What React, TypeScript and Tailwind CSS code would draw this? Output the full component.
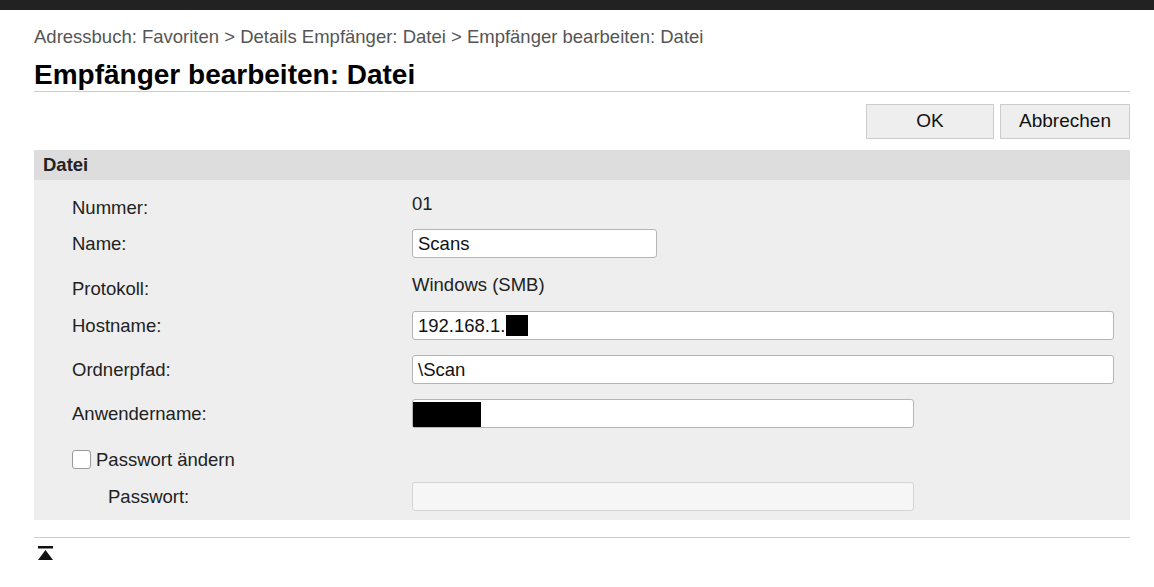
export default function App() {
  const font = { fontFamily: '"Liberation Sans", Arial, sans-serif' }
  const input =
    'h-[29px] rounded-[3px] border border-[#b5b5b5] bg-white pl-[5px] flex items-center text-[18.5px] text-[#111]'

  return (
    <div className="min-h-screen bg-white text-[#222]" style={font}>
      <div className="h-[10px] bg-[#222]" />
      <div className="mx-[34px] w-[1096px]">
        <div className="pt-[16px] text-[18.5px] leading-[22px] text-[#555]">
          Adressbuch: Favoriten &gt; Details Empfänger: Datei &gt; Empfänger bearbeiten: Datei
        </div>
        <h1 className="mt-[11px] border-b border-[#ccc] text-[28px] font-bold leading-[32px] text-black">
          Empfänger bearbeiten: Datei
        </h1>
        <div className="mt-[12px] flex justify-end gap-[6px]">
          <button className="h-[35px] w-[128px] border border-[#ccc] bg-[#eee] text-[19px] text-[#111]">
            OK
          </button>
          <button className="h-[35px] w-[130px] border border-[#ccc] bg-[#eee] text-[19px] text-[#111]">
            Abbrechen
          </button>
        </div>
        <div className="mt-[11px] flex h-[30px] items-center bg-[#ddd] pl-[9px] text-[18.5px] font-bold text-[#222]">
          Datei
        </div>
        <div className="flex flex-col bg-[#eee] pb-[9px] pl-[38px] pt-[13px] text-[18.5px] leading-[22px] text-[#222]">
          <div className="flex h-[29px]">
            <div className="w-[340px] pt-[4px]">Nummer:</div>
            <div className="pt-0">01</div>
          </div>
          <div className="mt-[7px] flex h-[29px] items-center">
            <div className="w-[340px] pt-[1px]">Name:</div>
            <div className={`${input} w-[245px]`}>Scans</div>
          </div>
          <div className="mt-[16px] flex h-[29px]">
            <div className="w-[340px] pt-[4px]">Protokoll:</div>
            <div className="pt-0">Windows (SMB)</div>
          </div>
          <div className="mt-[8px] flex h-[29px] items-center">
            <div className="w-[340px] pt-[1px]">Hostname:</div>
            <div className={`${input} w-[702px]`}>
              192.168.1.
              <span className="ml-[1px] inline-block h-[21px] w-[22px] bg-black" />
            </div>
          </div>
          <div className="mt-[15px] flex h-[29px] items-center">
            <div className="w-[340px] pt-[1px]">Ordnerpfad:</div>
            <div className={`${input} w-[702px]`}>\Scan</div>
          </div>
          <div className="mt-[15px] flex h-[29px] items-center">
            <div className="w-[340px] pt-[1px]">Anwendername:</div>
            <div className="flex h-[29px] w-[502px] items-end rounded-[3px] border border-[#b5b5b5] bg-white">
              <span className="h-[25px] w-[68px] bg-black" />
            </div>
          </div>
          <div className="mt-[17px] flex h-[29px] items-center">
            <label className="flex items-center">
              <span className="h-[19px] w-[19px] rounded-[3px] border border-[#999] bg-white" />
              <span className="ml-[5px]">Passwort ändern</span>
            </label>
          </div>
          <div className="mt-[8px] flex h-[29px] items-center">
            <div className="w-[340px] pl-[36px] pt-[1px]">Passwort:</div>
            <div className="h-[29px] w-[502px] rounded-[3px] border border-[#d4d4d4] bg-[#f6f6f6]" />
          </div>
        </div>
        <div className="mt-[17px] border-t border-[#ccc] pt-[8px] pl-[4px]">
          <svg width="15" height="15" viewBox="0 0 15 15" aria-label="Nach oben">
            <rect x="0" y="0" width="15" height="2.5" fill="#111" />
            <polygon points="7.5,4 15,14 0,14" fill="#111" />
          </svg>
        </div>
      </div>
    </div>
  )
}
